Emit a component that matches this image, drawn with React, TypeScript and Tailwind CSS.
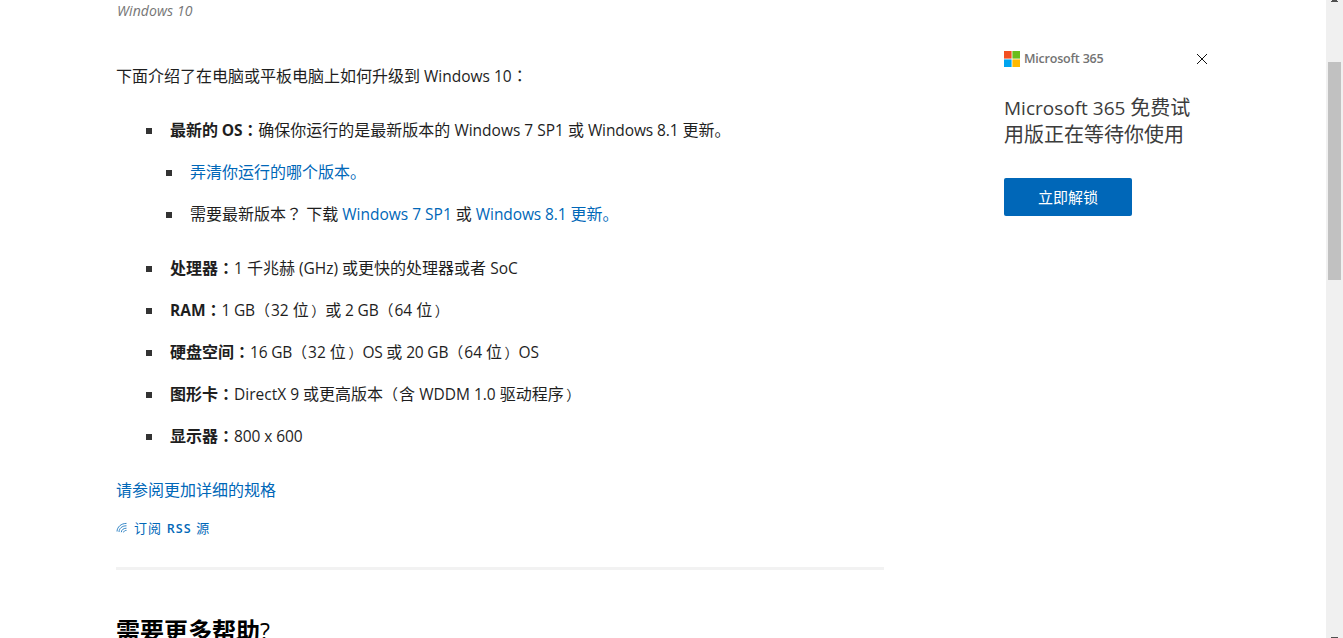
import type { ReactNode } from 'react';

function L({ children, className = '' }: { children: ReactNode; className?: string }) {
  return <span className={`text-[15.5px] leading-[0] whitespace-pre ${className}`}>{children}</span>;
}

function Mid({ children }: { children: ReactNode }) {
  return <span className="leading-[0] font-['Noto_Sans_CJK_TC',sans-serif]">{children}</span>;
}

function Open() {
  return <span className="mr-px text-[15px] leading-[0]">（</span>;
}

function Close() {
  return <span className="ml-[2.5px] text-[14px] leading-[0]">）</span>;
}

function Item({ label, children }: { label?: ReactNode; children: ReactNode }) {
  return (
    <li className="flex h-6 items-center whitespace-nowrap">
      <span className="mr-[18px] size-1.5 shrink-0 bg-[#333]" />
      <div className="h-[26px] leading-6">
        {label && (
          <b className="font-bold">
            {label}
            <Mid>：</Mid>
          </b>
        )}
        {children}
      </div>
    </li>
  );
}

function Article() {
  return (
    <main className="w-[768px] shrink-0 text-base leading-6 text-[#1e1e1e]">
      <p className="h-6 pl-px text-[14px] leading-[22px] tracking-[0.1px] text-[#767676] italic">Windows 10</p>
      <p className="mt-10 whitespace-nowrap">
        下面介绍了在电脑或平板电脑上如何升级到<L> Windows 10</L>
        <Mid>：</Mid>
      </p>
      <ul className="mt-[31px] ml-[30px] flex flex-col gap-[18px]">
        <Item label={<>最新的<L className="tracking-[-0.2px]"> OS</L></>}>
          确保你运行的是最新版本的<L> Windows 7 SP1 </L>或<L className="tracking-[-0.1px]"> Windows 8.1 </L>更新。
        </Item>
        <li className="mb-3 ml-5">
          <ul className="flex flex-col gap-[18px]">
            <Item>
              <a className="text-[#0067b8]">弄清你运行的哪个版本。</a>
            </Item>
            <Item>
              需要最新版本<Mid>？</Mid> 下载<L> </L>
              <a className="text-[#0067b8]"><L>Windows 7 SP1</L></a>
              <L> </L>或<L> </L>
              <a className="text-[#0067b8]"><L className="tracking-[-0.1px]">Windows 8.1 </L>更新。</a>
            </Item>
          </ul>
        </li>
        <Item label="处理器"><L>1 </L>千兆赫<L> (GHz) </L>或更快的处理器或者<L> SoC</L></Item>
        <Item label={<L>RAM</L>}>
          <L className="tracking-[-0.2px]">1 GB</L><Open /><L>32 </L>位<Close />或<L className="tracking-[-0.2px]"> 2 GB</L><Open /><L>64 </L>位<Close />
        </Item>
        <Item label="硬盘空间">
          <L className="tracking-[-0.2px]">16 GB</L><Open /><L>32 </L>位<Close /><L className="tracking-[-0.2px]">OS </L>或<L className="tracking-[-0.2px]"> 20 GB</L><Open /><L>64 </L>位<Close /><L className="tracking-[-0.2px]">OS</L>
        </Item>
        <Item label="图形卡">
          <L>DirectX 9 </L>或更高版本<Open />含<L> WDDM 1.0 </L>驱动程序<Close />
        </Item>
        <Item label="显示器"><L className="tracking-[-0.1px]">800 x 600</L></Item>
      </ul>
      <p className="mt-[29px] text-[#0067b8]">请参阅更加详细的规格</p>
      <a className="mt-[14px] flex h-6 items-center text-[13px] text-[#0067b8]">
        <svg className="mr-1.5 size-3" viewBox="0 0 12 12" fill="none" stroke="currentColor" strokeWidth="0.8">
          <path d="M1 9.5C1.2 5 5 1.4 10.5 1.4M3 10C3.2 6.3 6 3.8 10.5 3.8M5.3 10.2C5.5 7.8 7.5 6.2 10.5 6.2M7.5 10.4C7.8 9.2 8.8 8.4 10.5 8.4" />
        </svg>
        <span className="tracking-[1.1px] whitespace-nowrap">订阅 <span className="text-[12.5px] leading-[0] font-semibold">RSS</span> 源</span>
      </a>
      <hr className="mt-[27px] h-[3px] border-0 bg-[#f2f2f2]" />
      <h2 className="mt-[43px] h-9 text-2xl leading-9 font-bold whitespace-nowrap text-black">
        需要更多帮助<span className="text-[23px] leading-[0] font-normal">?</span>
      </h2>
    </main>
  );
}

function Promo() {
  return (
    <aside className="mt-[49px] ml-[120px] w-[204px] shrink-0">
      <div className="flex h-[19px] items-center">
        <svg className="size-4" viewBox="0 0 16 16">
          <path fill="#f25022" d="M0 0h7.6v7.6H0z" />
          <path fill="#6bbd1b" d="M8.4 0H16v7.6H8.4z" />
          <path fill="#00a4ef" d="M0 8.4h7.6V16H0z" />
          <path fill="#ffb900" d="M8.4 8.4H16V16H8.4z" />
        </svg>
        <span className="ml-1 pt-0.5 text-[12.5px] font-semibold tracking-[-0.2px] whitespace-nowrap text-[#737373]">Microsoft 365</span>
        <svg className="ml-auto size-3" viewBox="0 0 12 12" stroke="#111" strokeWidth="1">
          <path d="M1 1l10 10M11 1L1 11" />
        </svg>
      </div>
      <p className="mt-[26px] mb-[30px] text-xl leading-[27px] whitespace-nowrap text-[#3c3c3c]">
        <span className="text-[19px] leading-[0]">Microsoft 365 </span>免费试<br />用版正在等待你使用
      </p>
      <button className="flex h-[38px] w-32 items-center justify-center rounded-[2px] bg-[#0067b8] text-[15px] text-white">
        立即解锁
      </button>
    </aside>
  );
}

function Scrollbar() {
  return (
    <div className="ml-auto flex w-[17px] shrink-0 flex-col items-center bg-[#f0f0f0]">
      <svg className="h-[2px] w-[7px]" viewBox="0 0 7 2" fill="#505050">
        <path d="M1 0h5v1h1v1H0V1h1z" />
      </svg>
      <div className="mt-[60px] h-[218px] w-[13px] bg-[#c1c1c1]" />
      <div className="mt-auto h-px w-[7px] bg-[#505050]" />
    </div>
  );
}

export default function App() {
  return (
    <div className="flex h-[638px] w-[1343px] overflow-hidden bg-white pl-[116px] font-['Open_Sans','Noto_Sans_CJK_SC',sans-serif]">
      <Article />
      <Promo />
      <Scrollbar />
    </div>
  );
}
